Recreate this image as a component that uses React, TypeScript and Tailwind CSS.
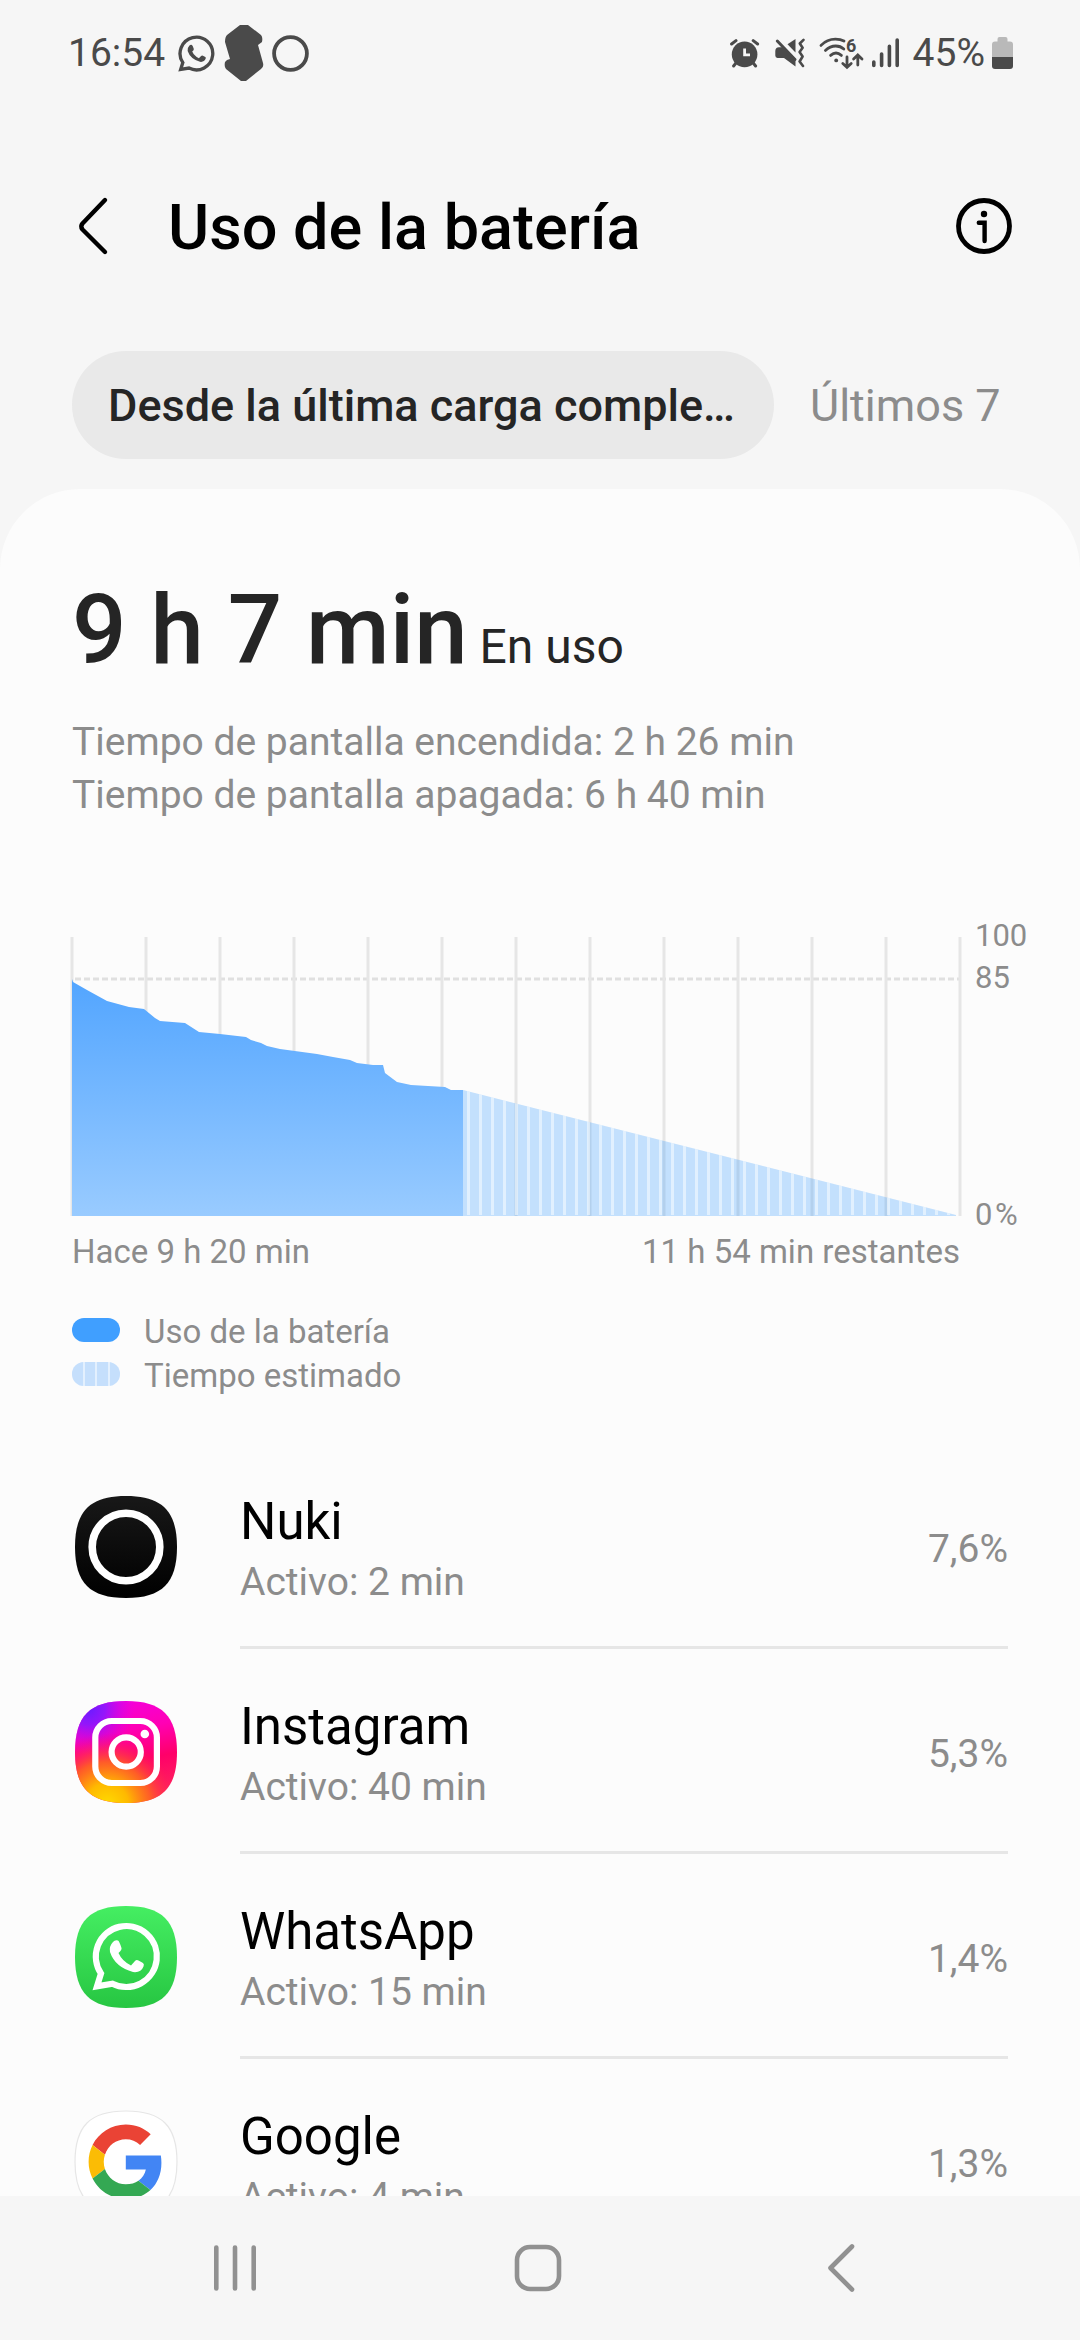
import type { ReactNode } from 'react'

type AppUsage = {
  nombre: string
  activo: string
  porcentaje: string
  icon: ReactNode
}

const SQUIRCLE = 'M51 0C87 0 102 15 102 51C102 87 87 102 51 102C15 102 0 87 0 51C0 15 15 0 51 0Z'

// Battery level over time, in chart coordinates
const LEVEL =
  'M0 59L1 62L15 70L35 81L57 87L72 89L83 98L88 101L113 103L127 112L148 114L174 117L179 120L189 123L195 126L208 129L245 134L261 137L278 140L285 143L301 145L311 145L313 153L325 162L339 165L373 167L379 170L391 170V296H0Z'

const GRID = [0, 74, 148, 222, 296, 370, 444, 518, 592, 666, 740, 814, 888]

function WhatsAppGlyph() {
  return (
    <>
      <path
        d="M26 67.5A30.5 30.5 0 1 1 37.5 77.7L22 80.3Z"
        fill="none"
        stroke="currentColor"
        strokeWidth="6.2"
      />
      <path
        d="M38 36Q40 33.5 43 34.5Q44.5 35.5 46.5 42Q47 44 43.5 47Q47 55 56 59.5L60 55Q61.5 53.5 63.5 54.5L68 57Q69.5 58 68.5 60.5Q66 67 58 66Q40 61 35 46Q34 40 38 36Z"
        fill="currentColor"
      />
    </>
  )
}

function NukiIcon() {
  return (
    <svg viewBox="0 0 102 102" className="w-[102px] h-[102px]" aria-hidden="true">
      <defs>
        <linearGradient id="nuki" x1="0" y1="0" x2="0" y2="1">
          <stop offset="0" stopColor="#181818" />
          <stop offset="1" stopColor="#000" />
        </linearGradient>
      </defs>
      <path d={SQUIRCLE} fill="url(#nuki)" />
      <circle cx="51" cy="51" r="33.8" fill="none" stroke="#fff" strokeWidth="7.6" />
    </svg>
  )
}

function InstagramIcon() {
  return (
    <svg viewBox="0 0 102 102" className="w-[102px] h-[102px]" aria-hidden="true">
      <defs>
        <linearGradient id="ig-base" x1="0.4" y1="0" x2="0.6" y2="1">
          <stop offset="0" stopColor="#f400dc" />
          <stop offset="0.3" stopColor="#ff00b4" />
          <stop offset="0.6" stopColor="#ff0069" />
          <stop offset="1" stopColor="#ff2a5a" />
        </linearGradient>
        <radialGradient id="ig-violet" gradientUnits="userSpaceOnUse" cx="14" cy="8" r="46">
          <stop offset="0" stopColor="#6a1cff" />
          <stop offset="0.35" stopColor="#8a18ff" stopOpacity="0.9" />
          <stop offset="1" stopColor="#d800f0" stopOpacity="0" />
        </radialGradient>
        <radialGradient id="ig-sun" gradientUnits="userSpaceOnUse" cx="32" cy="104" r="72">
          <stop offset="0" stopColor="#ffdc00" />
          <stop offset="0.3" stopColor="#ffb900" />
          <stop offset="0.6" stopColor="#ff6a1c" stopOpacity="0.85" />
          <stop offset="1" stopColor="#ff0069" stopOpacity="0" />
        </radialGradient>
      </defs>
      <path d={SQUIRCLE} fill="url(#ig-base)" />
      <path d={SQUIRCLE} fill="url(#ig-violet)" />
      <path d={SQUIRCLE} fill="url(#ig-sun)" />
      <rect x="20.3" y="20" width="61.6" height="62" rx="16.5" fill="none" stroke="#fff" strokeWidth="6.2" />
      <circle cx="51.2" cy="51" r="14.6" fill="none" stroke="#fff" strokeWidth="6.2" />
      <circle cx="69.8" cy="33" r="4.3" fill="#fff" />
    </svg>
  )
}

function WhatsAppIcon() {
  return (
    <svg viewBox="0 0 102 102" className="w-[102px] h-[102px] text-white" aria-hidden="true">
      <defs>
        <linearGradient id="wa" x1="0" y1="0" x2="0" y2="1">
          <stop offset="0" stopColor="#45ee62" />
          <stop offset="1" stopColor="#27c642" />
        </linearGradient>
      </defs>
      <path d={SQUIRCLE} fill="url(#wa)" />
      <WhatsAppGlyph />
    </svg>
  )
}

function GoogleIcon() {
  return (
    <svg viewBox="0 0 102 102" className="w-[102px] h-[102px] overflow-visible" aria-hidden="true">
      <path d={SQUIRCLE} fill="#fff" stroke="#e6e6e6" strokeWidth="1.2" />
      <g transform="translate(13.6 13.6) scale(1.55)">
        <path fill="#ea4335" d="M24 9.5c3.54 0 6.71 1.22 9.21 3.6l6.85-6.85C35.9 2.38 30.47 0 24 0 14.62 0 6.51 5.38 2.56 13.22l7.98 6.19C12.43 13.72 17.74 9.5 24 9.5z" />
        <path fill="#4285f4" d="M46.98 24.55c0-1.57-.15-3.09-.38-4.55H24v9.02h12.94c-.58 2.96-2.26 5.48-4.78 7.18l7.73 6c4.51-4.18 7.09-10.36 7.09-17.65z" />
        <path fill="#fbbc05" d="M10.53 28.59c-.48-1.45-.76-2.99-.76-4.59s.27-3.14.76-4.59l-7.98-6.19C.92 16.46 0 20.12 0 24c0 3.88.92 7.54 2.56 10.78l7.97-6.19z" />
        <path fill="#34a853" d="M24 48c6.48 0 11.93-2.13 15.89-5.81l-7.73-6c-2.15 1.45-4.92 2.3-8.16 2.3-6.26 0-11.57-4.22-13.47-9.91l-7.98 6.19C6.51 42.62 14.62 48 24 48z" />
      </g>
    </svg>
  )
}

const APPS: AppUsage[] = [
  { nombre: 'Nuki', activo: 'Activo: 2 min', porcentaje: '7,6%', icon: <NukiIcon /> },
  { nombre: 'Instagram', activo: 'Activo: 40 min', porcentaje: '5,3%', icon: <InstagramIcon /> },
  { nombre: 'WhatsApp', activo: 'Activo: 15 min', porcentaje: '1,4%', icon: <WhatsAppIcon /> },
  { nombre: 'Google', activo: 'Activo: 4 min', porcentaje: '1,3%', icon: <GoogleIcon /> },
]

function StatusBar() {
  return (
    <div className="h-[106px] shrink-0 pl-[68px] pr-[67px] flex items-center justify-between text-[39px] text-[#4a4a4a]">
      <div className="flex items-center">
        <span>16:54</span>
        <svg viewBox="17 16 69 69" className="w-[37px] h-[37px] ml-[13px]" aria-hidden="true">
          <WhatsAppGlyph />
        </svg>
        <svg viewBox="0 0 40 56" className="w-[40px] h-[56px] ml-[9px]" fill="currentColor" aria-hidden="true">
          <path d="M16 0H24L37 10Q39 12 38 17L34 20L39 38Q40 42 37 44L22 56H17L2 44Q0 42 1 37L3 35L6 34L1 17Q1 12 3 10Z" />
        </svg>
        <svg viewBox="0 0 37 37" className="w-[37px] h-[37px] ml-2" fill="none" stroke="currentColor" aria-hidden="true">
          <circle cx="18.5" cy="18.5" r="16.4" strokeWidth="3.8" />
        </svg>
      </div>

      <div className="flex items-center">
        <svg viewBox="0 0 30 30" className="w-[30px] h-[30px]" fill="none" stroke="currentColor" strokeLinecap="round" aria-hidden="true">
          <circle cx="14.6" cy="16.4" r="12.8" fill="currentColor" stroke="none" />
          <path d="M1.6 6L6 2.6M23.2 2.6L27.6 6" strokeWidth="3" />
          <path d="M6 25L3.6 28M23.2 25L25.6 28" strokeWidth="3" />
          <path d="M14.6 10.5V16.8H20" stroke="#f6f6f6" strokeWidth="2.8" strokeLinecap="butt" />
        </svg>
        <svg viewBox="0 0 31 30" className="w-[31px] h-[30px] ml-[14px]" fill="currentColor" stroke="currentColor" aria-hidden="true">
          <path d="M3.3 3L21 21.5" strokeWidth="3" strokeLinecap="round" />
          <path d="M2.5 10Q1.3 11 1.3 13V17.5Q1.3 19.5 3.5 20H10L21.5 28.5V21L9.5 9.3H6Q3.5 9 2.5 10Z" stroke="none" />
          <path d="M13.5 6.3L21.5 1V14.5Z" stroke="none" />
          <path d="M29.5 1.8L25.8 5.5L28.6 9.8L25.6 14L28.6 18.5L25.6 23.5L29 28" fill="none" strokeWidth="2.6" strokeLinecap="round" strokeLinejoin="round" />
        </svg>
        <svg viewBox="0 0 44 32" className="w-[44px] h-[32px] ml-[14px] overflow-visible" fill="none" stroke="currentColor" strokeWidth="2.8" strokeLinecap="round" aria-hidden="true">
          <path d="M2 8.4Q8 2.2 16.4 2.2Q21.5 2.2 25 4" />
          <path d="M6.4 13.4Q11 9 16.8 9Q21.5 9 24.8 12" />
          <path d="M11.6 18.4Q17 13.6 22.4 18.4" />
          <circle cx="17.2" cy="23.4" r="1.9" fill="currentColor" stroke="none" />
          <path d="M28 20V30M23.8 26.5L28 30.4L32.2 26.5M38.8 28V18.4M34.6 22L38.8 18L43 22" />
          <text x="27" y="14.5" fill="currentColor" stroke="none" className="text-[18px] font-bold">6</text>
        </svg>
        <svg viewBox="0 0 30 32" className="w-[30px] h-[32px] ml-[8px]" stroke="currentColor" strokeWidth="3.6" strokeLinecap="round" aria-hidden="true">
          <path d="M2.8 25V28.4M10.6 17V28.4M18.4 9.4V28.4M26.2 3V28.4" />
        </svg>
        <span className="ml-3">45%</span>
        <svg viewBox="0 0 21 32" className="w-[21px] h-[32px] ml-[7px]" aria-hidden="true">
          <path d="M5.5 2Q5.5 0 7.5 0H13.5Q15.5 0 15.5 2V4.5H18Q21 4.5 21 7.5V20H0V7.5Q0 4.5 3 4.5H5.5Z" fill="#b9b9b9" />
          <path d="M0 20H21V29Q21 32 18 32H3Q0 32 0 29Z" fill="currentColor" />
        </svg>
      </div>
    </div>
  )
}

function BatteryChart() {
  return (
    <svg viewBox="0 0 972 310" className="w-full h-auto mt-[98px] overflow-visible" role="img" aria-label="Uso de la batería">
      <defs>
        <linearGradient id="level" gradientUnits="userSpaceOnUse" x1="0" y1="59" x2="0" y2="296">
          <stop offset="0" stopColor="#52a5ff" />
          <stop offset="1" stopColor="#99cbff" />
        </linearGradient>
        <pattern id="stripes" patternUnits="userSpaceOnUse" x="391" y="0" width="12" height="310">
          <rect x="4" width="3" height="310" fill="#fff" fillOpacity="0.5" />
        </pattern>
      </defs>
      <path d="M3 59H888" stroke="#e0e0e0" strokeWidth="3" strokeDasharray="6 3" />
      {GRID.map((x) => (
        <path key={x} d={`M${x} 17V296`} stroke="#e6e6e6" strokeWidth="3" />
      ))}
      <path d={LEVEL} fill="url(#level)" />
      <path d="M391 170L884 295V296H391Z" fill="#409fff" fillOpacity="0.3" />
      <path d="M391 170L884 295H391Z" fill="url(#stripes)" />
      <g fill="#8c8c8c" className="text-[31px]">
        <text x="903" y="26">100</text>
        <text x="903" y="68">85</text>
        <text x="903" y="305">0</text>
        <text x="923" y="305">%</text>
      </g>
    </svg>
  )
}

export default function App() {
  return (
    <div className="h-screen flex flex-col overflow-hidden bg-[#f6f6f6] font-['Roboto',sans-serif] leading-normal">
      <StatusBar />

      <header className="h-[239px] mb-[6px] shrink-0 pl-[72px] pr-[68px] flex items-center gap-[52px] text-black">
        <button aria-label="Atrás" className="w-[44px] h-[60px] shrink-0">
          <svg viewBox="0 0 44 60" className="w-[44px] h-[60px]" fill="none" stroke="currentColor" strokeWidth="4.4" strokeLinecap="round" strokeLinejoin="round">
            <path d="M33 4L10.5 27.5Q8 30.5 10.5 33.5L33 56" />
          </svg>
        </button>
        <h1 className="flex-1 pt-1 text-[63px] leading-[76px] font-medium whitespace-nowrap">Uso de la batería</h1>
        <button aria-label="Información" className="shrink-0">
          <svg viewBox="0 0 56 56" className="w-[56px] h-[56px]" fill="none" stroke="currentColor" strokeLinecap="round">
            <circle cx="28" cy="28" r="25.5" strokeWidth="4.8" />
            <circle cx="28" cy="16" r="3.2" fill="currentColor" stroke="none" />
            <path d="M22.8 24.8H28.6V43" strokeWidth="4.4" />
          </svg>
        </button>
      </header>

      <nav className="h-[138px] shrink-0 pl-[72px] pr-[60px] flex items-start text-[45px] whitespace-nowrap">
        <button className="h-[108px] px-9 pt-[2px] min-w-0 w-[702px] truncate rounded-full bg-[#e9e9e9] text-left font-medium text-[#252525]">
          Desde la última carga completa
        </button>
        <button className="h-[108px] pl-9 pt-[2px] text-[#8c8c8c]">Últimos 7</button>
      </nav>

      <main className="flex-1 min-h-0 overflow-hidden rounded-t-[80px] bg-[#fcfcfc] text-[#8c8c8c]">
        <section className="pt-[85px] pl-[72px] pr-9">
          <h2 className="text-[96px] leading-[112px] font-medium text-[#252525]">
            9 h 7 min<span className="ml-3 text-[48px] leading-none font-normal">En uso</span>
          </h2>
          <p className="mt-[30px] text-[39px] leading-[53px]">
            Tiempo de pantalla encendida: 2 h 26 min
            <br />
            Tiempo de pantalla apagada: 6 h 40 min
          </p>

          <BatteryChart />
          <div className="mr-[84px] flex justify-between text-[33px] leading-[44px]">
            <span>Hace 9 h 20 min</span>
            <span>11 h 54 min restantes</span>
          </div>

          <ul className="mt-9 text-[33px] leading-[44px]">
            <li className="flex items-center gap-6">
              <span className="mb-1 w-12 h-6 rounded-full bg-[#409fff]" />
              Uso de la batería
            </li>
            <li className="flex items-center gap-6">
              <span className="mb-1 w-12 h-6 rounded-full overflow-hidden flex gap-[2px] bg-[#e3f0fe]">
                <span className="flex-1 bg-[#c5dffc]" />
                <span className="flex-1 bg-[#c5dffc]" />
                <span className="flex-1 bg-[#c5dffc]" />
                <span className="flex-1 bg-[#c5dffc]" />
              </span>
              Tiempo estimado
            </li>
          </ul>
        </section>

        <ul className="mt-[46px] pl-[75px] pr-[72px]">
          {APPS.map((app) => (
            <li key={app.nombre} className="h-[205px] flex items-center gap-[63px]">
              <div className="shrink-0">{app.icon}</div>
              <div className="flex-1 h-full pt-2 flex items-center justify-between border-b-3 border-[#e6e6e6]">
                <div>
                  <p className="text-[51px] leading-[66px] text-black">{app.nombre}</p>
                  <p className="text-[39px] leading-[54px]">{app.activo}</p>
                </div>
                <span className="text-[39px]">{app.porcentaje}</span>
              </div>
            </li>
          ))}
        </ul>
      </main>

      <nav className="h-[144px] shrink-0 pl-[84px] pr-[88px] flex items-center text-[#919191]">
        <button aria-label="Recientes" className="flex-1 flex justify-center">
          <svg viewBox="0 0 48 48" className="w-[48px] h-[48px]" stroke="currentColor" strokeWidth="4.6" strokeLinecap="round">
            <path d="M5.3 3.5V44.5M24 3.5V44.5M42.7 3.5V44.5" />
          </svg>
        </button>
        <button aria-label="Inicio" className="flex-1 flex justify-center">
          <svg viewBox="0 0 48 48" className="w-[48px] h-[48px]" fill="none" stroke="currentColor" strokeWidth="4.6">
            <rect x="3" y="3" width="42" height="42" rx="13" />
          </svg>
        </button>
        <button aria-label="Volver" className="flex-1 flex justify-center">
          <svg viewBox="0 0 48 48" className="w-[48px] h-[48px]" fill="none" stroke="currentColor" strokeWidth="4.6" strokeLinecap="round" strokeLinejoin="round">
            <path d="M35 2.5L13.5 24L35 45.5" />
          </svg>
        </button>
      </nav>
    </div>
  )
}
